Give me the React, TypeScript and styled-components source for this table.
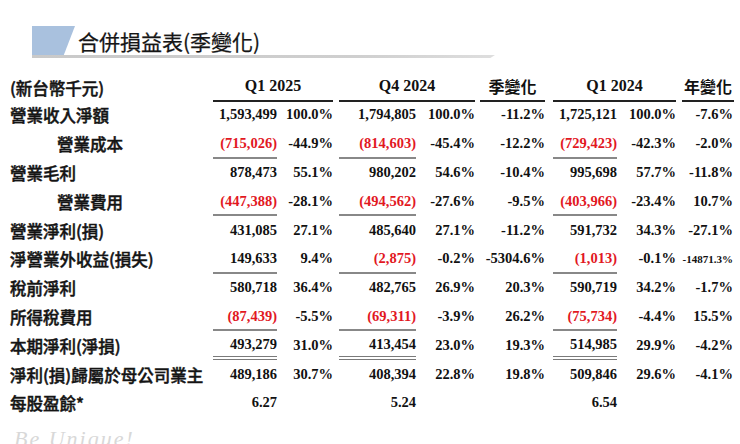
import React from 'react';
import styled, { createGlobalStyle, css } from 'styled-components';

const GlobalStyle = createGlobalStyle`
  html, body {
    margin: 0;
    padding: 0;
    background: #ffffff;
    overflow: hidden;
  }
`;

const LABEL_FONT = `Arial, "Liberation Sans", "Noto Sans CJK TC", sans-serif`;
const NUM_FONT = `"Liberation Serif", "Times New Roman", serif`;

type Rule = 'single' | 'double' | undefined;

interface IRow {
  label: string
  indent?: boolean
  rule?: Rule
  cells: string[]
  smallYoy?: boolean
}

const rows: IRow[] = [
  { label: '營業收入淨額', cells: ['1,593,499', '100.0%', '1,794,805', '100.0%', '-11.2%', '1,725,121', '100.0%', '-7.6%'] },
  { label: '營業成本', indent: true, rule: 'single', cells: ['(715,026)', '-44.9%', '(814,603)', '-45.4%', '-12.2%', '(729,423)', '-42.3%', '-2.0%'] },
  { label: '營業毛利', cells: ['878,473', '55.1%', '980,202', '54.6%', '-10.4%', '995,698', '57.7%', '-11.8%'] },
  { label: '營業費用', indent: true, rule: 'single', cells: ['(447,388)', '-28.1%', '(494,562)', '-27.6%', '-9.5%', '(403,966)', '-23.4%', '10.7%'] },
  { label: '營業淨利(損)', cells: ['431,085', '27.1%', '485,640', '27.1%', '-11.2%', '591,732', '34.3%', '-27.1%'] },
  { label: '淨營業外收益(損失)', rule: 'single', smallYoy: true, cells: ['149,633', '9.4%', '(2,875)', '-0.2%', '-5304.6%', '(1,013)', '-0.1%', '-14871.3%'] },
  { label: '稅前淨利', cells: ['580,718', '36.4%', '482,765', '26.9%', '20.3%', '590,719', '34.2%', '-1.7%'] },
  { label: '所得稅費用', rule: 'single', cells: ['(87,439)', '-5.5%', '(69,311)', '-3.9%', '26.2%', '(75,734)', '-4.4%', '15.5%'] },
  { label: '本期淨利(淨損)', rule: 'double', cells: ['493,279', '31.0%', '413,454', '23.0%', '19.3%', '514,985', '29.9%', '-4.2%'] },
  { label: '淨利(損)歸屬於母公司業主', cells: ['489,186', '30.7%', '408,394', '22.8%', '19.8%', '509,846', '29.6%', '-4.1%'] },
  { label: '每股盈餘*', cells: ['6.27', '', '5.24', '', '', '6.54', '', ''] }
];

// columns: label | v1 | p1 | v2 | p2 | qoq | v3 | p3 | yoy
const GRID = '203px 64px 56px 83px 59px 70px 72px 59px 58px';
// left offset of the rule under each value column (gap between groups)
const VALUE_OFFSET = [0, 6, 8];

const Page = styled.div`
  width: 740px;
  height: 444px;
  padding-top: 26px;
  box-sizing: border-box;
  font-family: ${LABEL_FONT};
  color: #111;
`;

const TitleBlock = styled.div`
  margin-left: 32px;
  width: 463px;
`;

const TitleBar = styled.div`
  display: flex;
  align-items: center;
  height: 29px;
  gap: 3px;
`;

const TitleShape = styled.div`
  width: 43px;
  height: 29px;
  background: #a9c1de;
  clip-path: polygon(0 0, 100% 0, 74% 100%, 0 100%);
`;

const TitleText = styled.h1`
  margin: 0;
  font-family: "Noto Sans CJK TC", sans-serif;
  font-size: 21px;
  font-weight: 400;
  line-height: 29px;
  color: #151515;
  padding-top: 2px;
  -webkit-text-stroke: 0.25px #151515;
`;

const TitleRule = styled.div`
  height: 3px;
  background: linear-gradient(90deg, #c9c9c9 0%, #cfcfcf 70%, #dedede 100%);
  clip-path: polygon(0 0, 100% 0, 99% 100%, 0 100%);
`;

const Table = styled.div`
  margin-top: 16px;
  padding-left: 10px;
`;

const Row = styled.div<{ $header?: boolean }>`
  display: grid;
  grid-template-columns: ${GRID};
  height: ${p => (p.$header ? '27px' : '28.8px')};
  align-items: stretch;
`;

const Label = styled.div<{ $indent?: boolean }>`
  display: flex;
  align-items: center;
  padding-left: ${p => (p.$indent ? '47px' : '0')};
  font-family: "Noto Sans CJK TC", sans-serif;
  font-size: 16.5px;
  font-weight: 500;
  white-space: nowrap;
  color: #141414;
  -webkit-text-stroke: 0.45px #141414;
`;

const HeadCell = styled.div<{ $span: number; $offset: number; $cjk?: boolean }>`
  grid-column: span ${p => p.$span};
  margin-left: ${p => p.$offset}px;
  display: flex;
  align-items: center;
  justify-content: center;
  border-bottom: 2px solid #222;
  font-family: ${p => (p.$cjk ? `"Noto Sans CJK TC", sans-serif` : NUM_FONT)};
  font-size: 16px;
  font-weight: 700;
  padding-bottom: 2px;
  color: #111;
`;

const ruleStyle = (rule: Rule) => {
  if (rule === 'single') return css`border-bottom: 2px solid #888;`;
  if (rule === 'double') return css`border-bottom: 4px double #7a7a7a;`;
  return css`border-bottom: 2px solid transparent;`;
};

const Cell = styled.div<{ $red?: boolean; $rule?: Rule; $offset?: number; $small?: boolean }>`
  display: flex;
  align-items: center;
  justify-content: flex-end;
  margin-left: ${p => p.$offset || 0}px;
  padding-top: 1px;
  font-family: ${NUM_FONT};
  font-size: ${p => (p.$small ? '11px' : '14.5px')};
  font-weight: 700;
  white-space: nowrap;
  color: ${p => (p.$red ? '#e2181f' : '#111')};
  ${p => ruleStyle(p.$rule)}
  box-sizing: border-box;
`;

const LastCell = styled(Cell)`
  padding-right: 1px;
`;

const Footer = styled.div`
  margin: 8px 0 0 14px;
  font-family: "Liberation Serif", serif;
  font-style: italic;
  font-size: 22px;
  letter-spacing: 2px;
  color: #d8d8d8;
`;

const DataRow = ({ row }: { row: IRow }) => {
  const [v1, p1, v2, p2, qoq, v3, p3, yoy] = row.cells;
  const red = (s: string) => s.startsWith('(');
  return (
    <Row>
      <Label $indent={row.indent}>{row.label}</Label>
      <Cell $red={red(v1)} $rule={row.rule} $offset={VALUE_OFFSET[0]}>{v1}</Cell>
      <Cell>{p1}</Cell>
      <Cell $red={red(v2)} $rule={row.rule} $offset={VALUE_OFFSET[1]}>{v2}</Cell>
      <Cell>{p2}</Cell>
      <Cell>{qoq}</Cell>
      <Cell $red={red(v3)} $rule={row.rule} $offset={VALUE_OFFSET[2]}>{v3}</Cell>
      <Cell>{p3}</Cell>
      <LastCell $small={row.smallYoy}>{yoy}</LastCell>
    </Row>
  );
};

const App = () => {
  return (
    <Page>
      <GlobalStyle />
      <TitleBlock>
        <TitleBar>
          <TitleShape />
          <TitleText>合併損益表(季變化)</TitleText>
        </TitleBar>
        <TitleRule />
      </TitleBlock>
      <Table>
        <Row $header>
          <Label>(新台幣千元)</Label>
          <HeadCell $span={2} $offset={0}>Q1 2025</HeadCell>
          <HeadCell $span={2} $offset={6}>Q4 2024</HeadCell>
          <HeadCell $span={1} $offset={5} $cjk>季變化</HeadCell>
          <HeadCell $span={2} $offset={8}>Q1 2024</HeadCell>
          <HeadCell $span={1} $offset={6} $cjk>年變化</HeadCell>
        </Row>
        {rows.map(row => (
          <DataRow key={row.label} row={row} />
        ))}
      </Table>
      <Footer>Be Unique!</Footer>
    </Page>
  );
};

export default App;
